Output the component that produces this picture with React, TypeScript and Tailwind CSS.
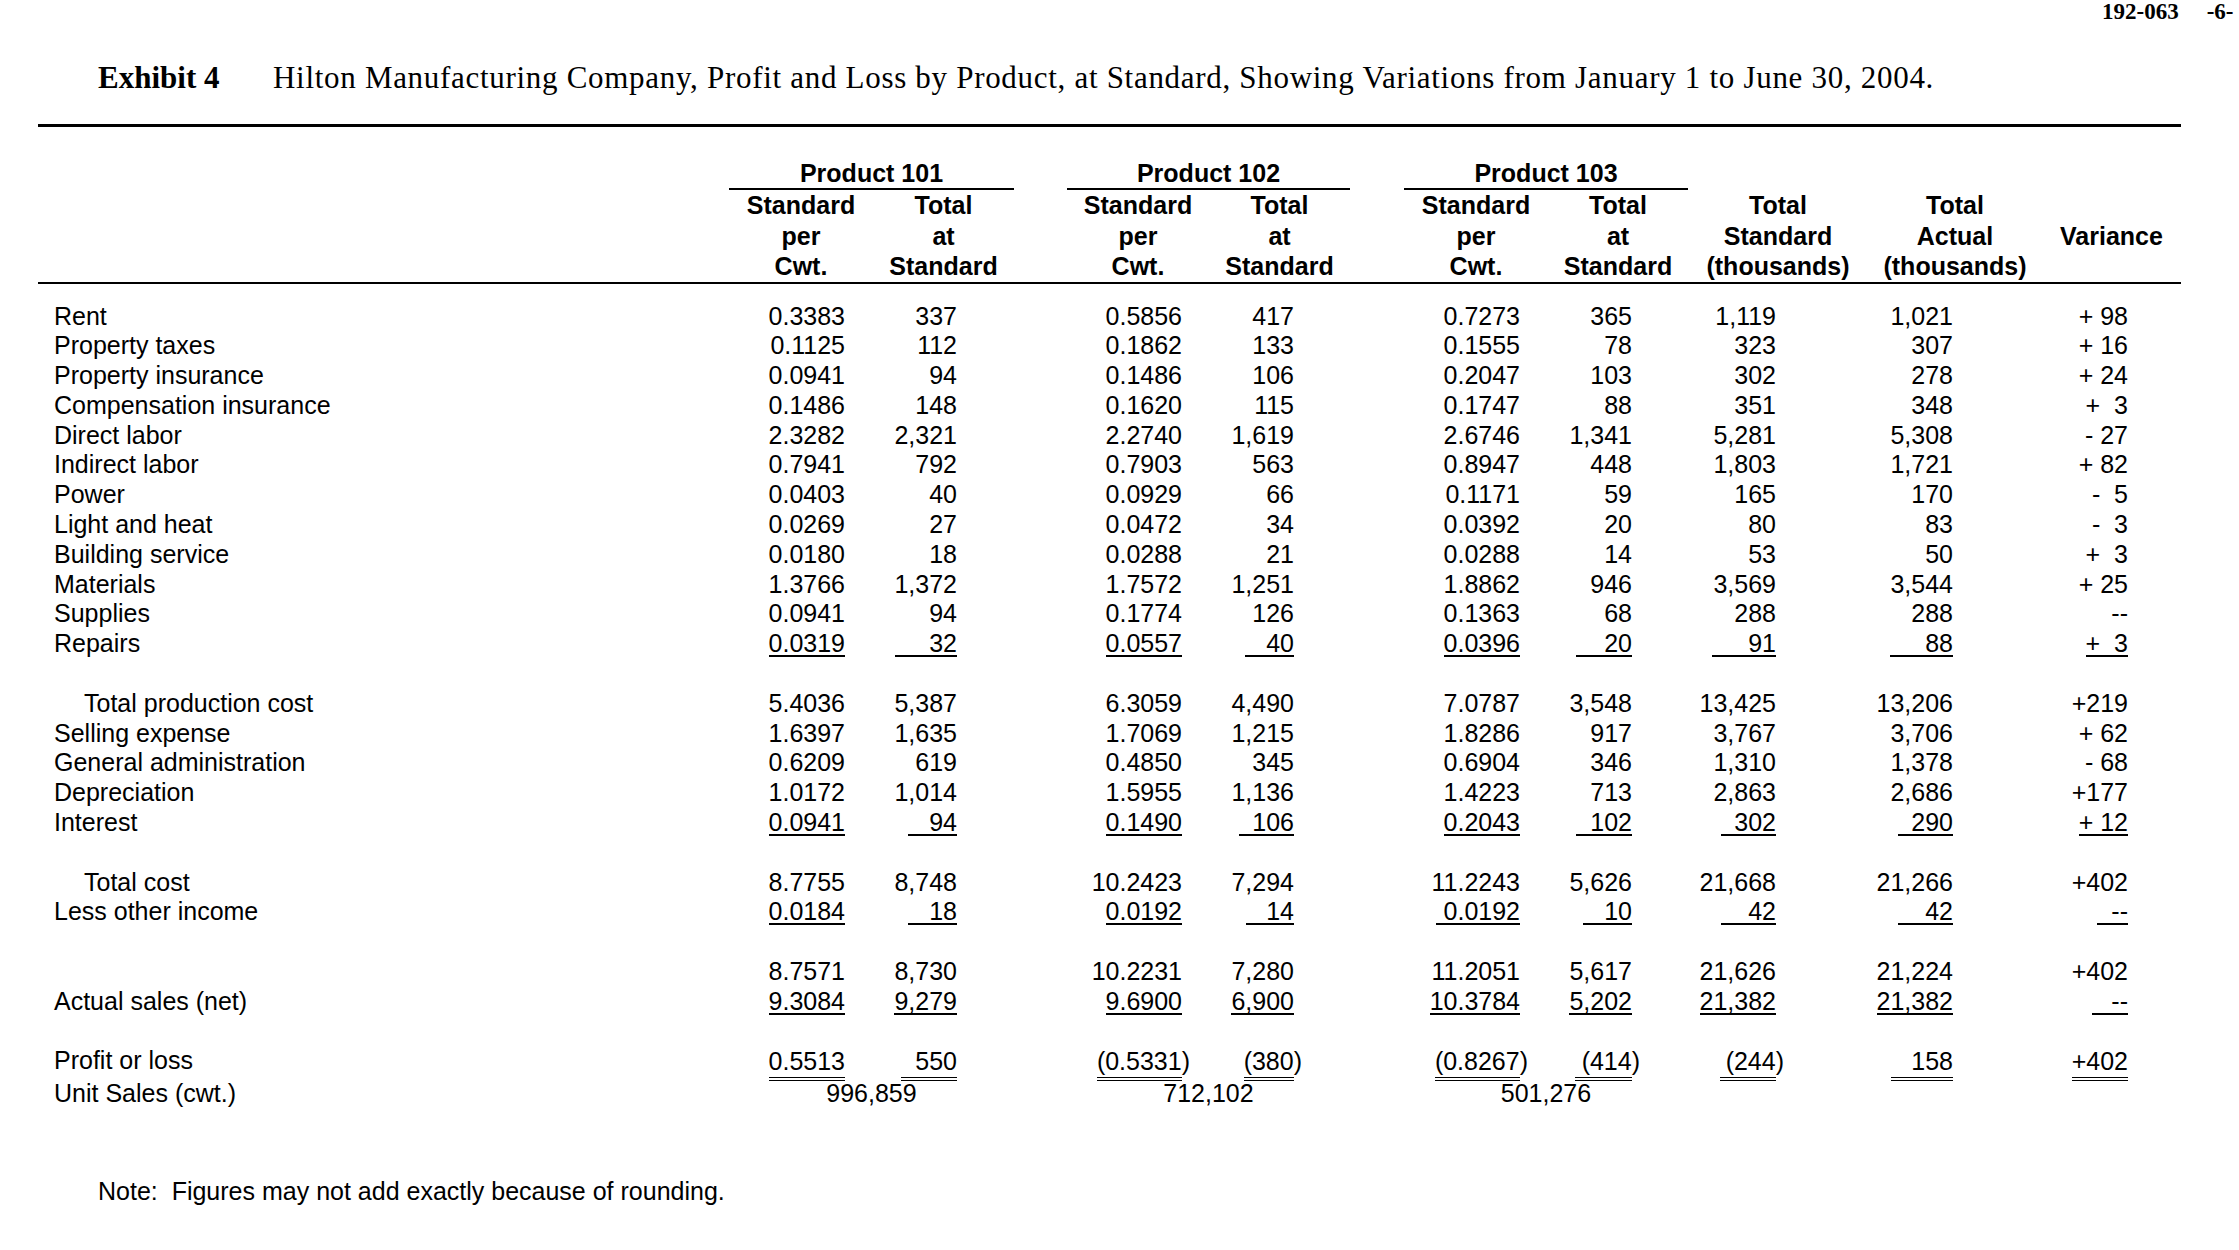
import React from "react";
import clsx from "clsx";

type Cell = string | { v: string; u: 1 | 2; w?: string; close?: boolean };

const S = (v: string, w = ""): Cell => ({ v, u: 1, w });
const D = (v: string, w = "", close = false): Cell => ({ v, u: 2, w, close });

type Row = { label?: string; indent?: boolean; cells?: Cell[] } | null;

// column widths + right padding so figures line up with the printed exhibit
const colCls = [
  "w-[144px] pr-[28px]",
  "w-[141px] pr-[57px]",
  "ml-[53px] w-[142px] pr-[27px]",
  "w-[141px] pr-[56px]",
  "ml-[54px] w-[144px] pr-[28px]",
  "w-[140px] pr-[56px]",
  "w-[180px] pr-[92px]",
  "w-[174px] pr-[89px]",
  "w-[139px] pr-[53px]",
];

const headCls = [
  "w-[144px]",
  "w-[141px]",
  "ml-[53px] w-[142px]",
  "w-[141px]",
  "ml-[54px] w-[144px]",
  "w-[140px]",
  "w-[180px]",
  "w-[174px]",
  "w-[139px]",
];

const heads = [
  ["Standard", "per", "Cwt."],
  ["Total", "at", "Standard"],
  ["Standard", "per", "Cwt."],
  ["Total", "at", "Standard"],
  ["Standard", "per", "Cwt."],
  ["Total", "at", "Standard"],
  ["Total", "Standard", "(thousands)"],
  ["Total", "Actual", "(thousands)"],
  ["", "Variance", ""],
];

const rows: Row[] = [
  { label: "Rent", cells: ["0.3383", "337", "0.5856", "417", "0.7273", "365", "1,119", "1,021", "+ 98"] },
  { label: "Property taxes", cells: ["0.1125", "112", "0.1862", "133", "0.1555", "78", "323", "307", "+ 16"] },
  { label: "Property insurance", cells: ["0.0941", "94", "0.1486", "106", "0.2047", "103", "302", "278", "+ 24"] },
  { label: "Compensation insurance", cells: ["0.1486", "148", "0.1620", "115", "0.1747", "88", "351", "348", "+  3"] },
  { label: "Direct labor", cells: ["2.3282", "2,321", "2.2740", "1,619", "2.6746", "1,341", "5,281", "5,308", "- 27"] },
  { label: "Indirect labor", cells: ["0.7941", "792", "0.7903", "563", "0.8947", "448", "1,803", "1,721", "+ 82"] },
  { label: "Power", cells: ["0.0403", "40", "0.0929", "66", "0.1171", "59", "165", "170", "-  5"] },
  { label: "Light and heat", cells: ["0.0269", "27", "0.0472", "34", "0.0392", "20", "80", "83", "-  3"] },
  { label: "Building service", cells: ["0.0180", "18", "0.0288", "21", "0.0288", "14", "53", "50", "+  3"] },
  { label: "Materials", cells: ["1.3766", "1,372", "1.7572", "1,251", "1.8862", "946", "3,569", "3,544", "+ 25"] },
  { label: "Supplies", cells: ["0.0941", "94", "0.1774", "126", "0.1363", "68", "288", "288", "--"] },
  {
    label: "Repairs",
    cells: [S("0.0319"), S("32", "w-[62px]"), S("0.0557"), S("40", "w-[49px]"), S("0.0396"), S("20", "w-[56px]"), S("91", "w-[64px]"), S("88", "w-[63px]"), S("+  3")],
  },
  null,
  { label: "Total production cost", indent: true, cells: ["5.4036", "5,387", "6.3059", "4,490", "7.0787", "3,548", "13,425", "13,206", "+219"] },
  { label: "Selling expense", cells: ["1.6397", "1,635", "1.7069", "1,215", "1.8286", "917", "3,767", "3,706", "+ 62"] },
  { label: "General administration", cells: ["0.6209", "619", "0.4850", "345", "0.6904", "346", "1,310", "1,378", "- 68"] },
  { label: "Depreciation", cells: ["1.0172", "1,014", "1.5955", "1,136", "1.4223", "713", "2,863", "2,686", "+177"] },
  {
    label: "Interest",
    cells: [S("0.0941"), S("94", "w-[49px]"), S("0.1490"), S("106", "w-[55px]"), S("0.2043"), S("102", "w-[56px]"), S("302", "w-[55px]"), S("290", "w-[55px]"), S("+ 12")],
  },
  null,
  { label: "Total cost", indent: true, cells: ["8.7755", "8,748", "10.2423", "7,294", "11.2243", "5,626", "21,668", "21,266", "+402"] },
  {
    label: "Less other income",
    cells: [S("0.0184"), S("18", "w-[49px]"), S("0.0192"), S("14", "w-[48px]"), S("0.0192", "w-[84px]"), S("10", "w-[49px]"), S("42", "w-[55px]"), S("42", "w-[55px]"), S("--", "w-[31px]")],
  },
  null,
  { cells: ["8.7571", "8,730", "10.2231", "7,280", "11.2051", "5,617", "21,626", "21,224", "+402"] },
  {
    label: "Actual sales (net)",
    cells: [S("9.3084"), S("9,279"), S("9.6900"), S("6,900"), S("10.3784"), S("5,202"), S("21,382"), S("21,382"), S("--", "w-[36px]")],
  },
  null,
  {
    label: "Profit or loss",
    cells: [D("0.5513"), D("550", "w-[56px]"), D("(0.5331", "", true), D("(380", "", true), D("(0.8267", "", true), D("(414", "w-[57px]", true), D("(244", "w-[56px]", true), D("158", "w-[62px]"), D("+402")],
  },
];

function Value({ c }: { c: Cell }) {
  if (typeof c === "string") return <span className="whitespace-pre">{c}</span>;
  return (
    <>
      <span
        className={clsx(
          "inline-block whitespace-pre text-right border-black",
          c.u === 2 ? "border-b-[4px] border-double pb-[1px] leading-[30px]" : "border-b-2 leading-[24px]",
          c.w
        )}
      >
        {c.v}
      </span>
      {c.close && <span className="-mr-[8px]">)</span>}
    </>
  );
}

export default function App() {
  return (
    <div className="w-[2239px] h-[1250px] overflow-hidden bg-white text-black font-['Liberation_Sans',Arial,sans-serif] text-[25px]">
      {/* page number */}
      <div className="flex h-[22px] pt-[2px] leading-[20px] pl-[2102px] whitespace-nowrap font-['Liberation_Serif','Times_New_Roman',serif] font-bold text-[23px]">
        <span>192-063</span>
        <span className="ml-[28px]">-6-</span>
      </div>

      {/* title */}
      <div className="mt-[36px] flex h-[40px] items-center pl-[98px] whitespace-nowrap font-['Liberation_Serif','Times_New_Roman',serif] text-[31px]">
        <span className="w-[175px] font-bold">Exhibit 4</span>
        <span className="tracking-[0.7px]">
          Hilton Manufacturing Company, Profit and Loss by Product, at Standard, Showing Variations from January 1 to June 30, 2004.
        </span>
      </div>

      <div className="ml-[38px] w-[2143px]">
        <div className="mt-[26px] border-t-[3px] border-black" />

        {/* column headings */}
        <div className="mt-[31px] border-b-2 border-black font-bold">
          <div className="flex h-[32px] leading-[30px]">
            <div className="w-[691px]" />
            <div className="w-[285px] border-b-2 border-black text-center">Product 101</div>
            <div className="ml-[53px] w-[283px] border-b-2 border-black text-center">Product 102</div>
            <div className="ml-[54px] w-[284px] border-b-2 border-black text-center">Product 103</div>
          </div>
          <div className="flex">
            <div className="w-[691px]" />
            {heads.map((h, i) => (
              <div key={i} className={clsx("text-center whitespace-nowrap", headCls[i])}>
                {h.map((t, j) => (
                  <div key={j} className="h-[30.5px] leading-[30.5px]">
                    {t}
                  </div>
                ))}
              </div>
            ))}
          </div>
        </div>

        {/* body */}
        <div className="mt-[18px]">
          {rows.map((r, i) =>
            r === null ? (
              <div key={i} className="h-[29.8px]" />
            ) : (
              <div key={i} className="flex h-[29.8px] leading-[29.8px] whitespace-nowrap">
                <div className={clsx("w-[691px]", r.indent ? "pl-[46px]" : "pl-[16px]")}>{r.label}</div>
                {r.cells?.map((c, j) => (
                  <div key={j} className={clsx("text-right", colCls[j])}>
                    <Value c={c} />
                  </div>
                ))}
              </div>
            )
          )}
          <div className="mt-[3px] flex h-[29.8px] leading-[29.8px] whitespace-nowrap">
            <div className="w-[691px] pl-[16px]">Unit Sales (cwt.)</div>
            <div className="w-[285px] text-center">996,859</div>
            <div className="ml-[53px] w-[283px] text-center">712,102</div>
            <div className="ml-[54px] w-[284px] text-center">501,276</div>
          </div>
        </div>

        <div className="mt-[68px] h-[29.8px] leading-[29.8px] pl-[60px] whitespace-pre">
          Note:  Figures may not add exactly because of rounding.
        </div>
      </div>
    </div>
  );
}
